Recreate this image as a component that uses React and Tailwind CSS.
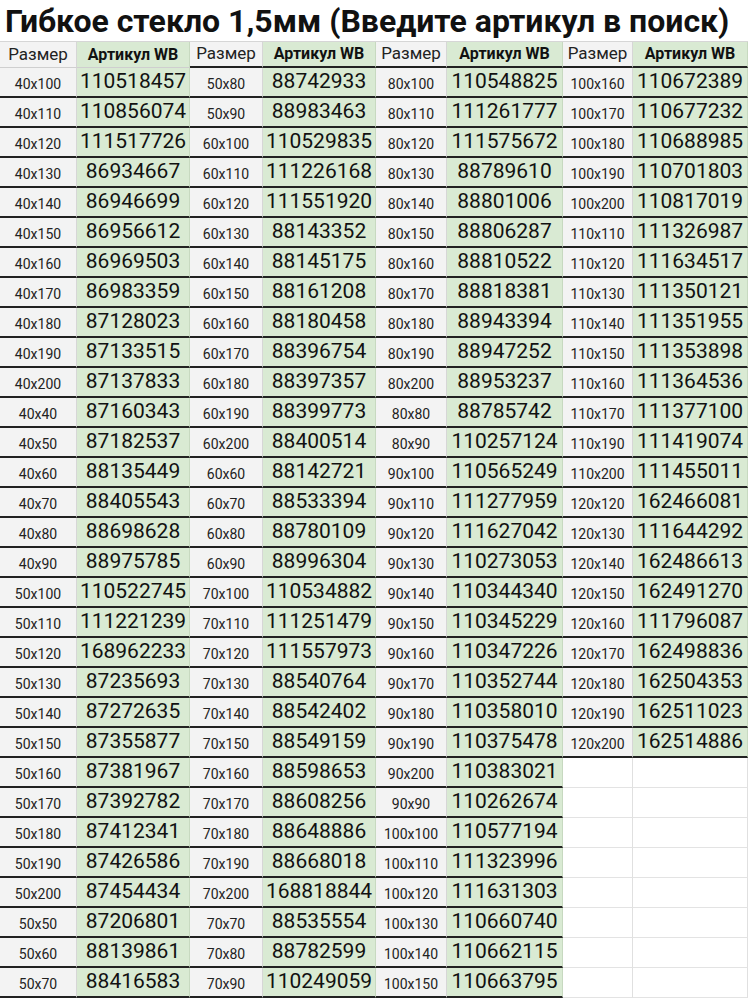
const pairs = [
  [
    ['40x100', '110518457'], ['40x110', '110856074'], ['40x120', '111517726'], ['40x130', '86934667'],
    ['40x140', '86946699'], ['40x150', '86956612'], ['40x160', '86969503'], ['40x170', '86983359'],
    ['40x180', '87128023'], ['40x190', '87133515'], ['40x200', '87137833'], ['40x40', '87160343'],
    ['40x50', '87182537'], ['40x60', '88135449'], ['40x70', '88405543'], ['40x80', '88698628'],
    ['40x90', '88975785'], ['50x100', '110522745'], ['50x110', '111221239'], ['50x120', '168962233'],
    ['50x130', '87235693'], ['50x140', '87272635'], ['50x150', '87355877'], ['50x160', '87381967'],
    ['50x170', '87392782'], ['50x180', '87412341'], ['50x190', '87426586'], ['50x200', '87454434'],
    ['50x50', '87206801'], ['50x60', '88139861'], ['50x70', '88416583'],
  ],
  [
    ['50x80', '88742933'], ['50x90', '88983463'], ['60x100', '110529835'], ['60x110', '111226168'],
    ['60x120', '111551920'], ['60x130', '88143352'], ['60x140', '88145175'], ['60x150', '88161208'],
    ['60x160', '88180458'], ['60x170', '88396754'], ['60x180', '88397357'], ['60x190', '88399773'],
    ['60x200', '88400514'], ['60x60', '88142721'], ['60x70', '88533394'], ['60x80', '88780109'],
    ['60x90', '88996304'], ['70x100', '110534882'], ['70x110', '111251479'], ['70x120', '111557973'],
    ['70x130', '88540764'], ['70x140', '88542402'], ['70x150', '88549159'], ['70x160', '88598653'],
    ['70x170', '88608256'], ['70x180', '88648886'], ['70x190', '88668018'], ['70x200', '168818844'],
    ['70x70', '88535554'], ['70x80', '88782599'], ['70x90', '110249059'],
  ],
  [
    ['80x100', '110548825'], ['80x110', '111261777'], ['80x120', '111575672'], ['80x130', '88789610'],
    ['80x140', '88801006'], ['80x150', '88806287'], ['80x160', '88810522'], ['80x170', '88818381'],
    ['80x180', '88943394'], ['80x190', '88947252'], ['80x200', '88953237'], ['80x80', '88785742'],
    ['80x90', '110257124'], ['90x100', '110565249'], ['90x110', '111277959'], ['90x120', '111627042'],
    ['90x130', '110273053'], ['90x140', '110344340'], ['90x150', '110345229'], ['90x160', '110347226'],
    ['90x170', '110352744'], ['90x180', '110358010'], ['90x190', '110375478'], ['90x200', '110383021'],
    ['90x90', '110262674'], ['100x100', '110577194'], ['100x110', '111323996'], ['100x120', '111631303'],
    ['100x130', '110660740'], ['100x140', '110662115'], ['100x150', '110663795'],
  ],
  [
    ['100x160', '110672389'], ['100x170', '110677232'], ['100x180', '110688985'], ['100x190', '110701803'],
    ['100x200', '110817019'], ['110x110', '111326987'], ['110x120', '111634517'], ['110x130', '111350121'],
    ['110x140', '111351955'], ['110x150', '111353898'], ['110x160', '111364536'], ['110x170', '111377100'],
    ['110x190', '111419074'], ['110x200', '111455011'], ['120x120', '162466081'], ['120x130', '111644292'],
    ['120x140', '162486613'], ['120x150', '162491270'], ['120x160', '111796087'], ['120x170', '162498836'],
    ['120x180', '162504353'], ['120x190', '162511023'], ['120x200', '162514886'],
  ],
];

const ROWS = 31;

function SizeCell({ text }) {
  return (
    <div className="h-[30px] bg-[#f3f3f3] border-r border-r-[#d6d6d6] border-b-2 border-b-[#222] flex items-center justify-center pt-[5px] text-[14px] text-[#222]">
      {text}
    </div>
  );
}

function ArtCell({ text }) {
  return (
    <div className="h-[30px] bg-[#d9ead3] border-r border-r-[#c7d9c0] border-b-2 border-b-[#222] flex items-center justify-center text-[21px] text-[#111]">
      {text}
    </div>
  );
}

function EmptyCell() {
  return <div className="h-[30px] bg-white border-r border-r-[#e0e0e0] border-b border-b-[#e3e3e3]" />;
}

export default function App() {
  const cells = [];
  for (let r = 0; r < ROWS; r++) {
    pairs.forEach((col, p) => {
      const row = col[r];
      if (row) {
        cells.push(<SizeCell key={`s${p}-${r}`} text={row[0]} />);
        cells.push(<ArtCell key={`a${p}-${r}`} text={row[1]} />);
      } else {
        cells.push(<EmptyCell key={`es${p}-${r}`} />);
        cells.push(<EmptyCell key={`ea${p}-${r}`} />);
      }
    });
  }

  return (
    <div className="w-[750px] h-[1000px] overflow-hidden bg-white font-['Roboto','Liberation_Sans',sans-serif]">
      <div className="h-[41px] flex items-center pl-[5px] text-[32px] font-bold text-[#111] leading-none whitespace-nowrap">
        Гибкое стекло 1,5мм (Введите артикул в поиск)
      </div>
      <div className="w-[748px] border-t border-t-[#d6d6d6] grid grid-cols-[77px_113px_73px_113px_71px_116px_70px_115px]">
        {[0, 1, 2, 3].map(p => (
          <div key={`h${p}`} className="contents">
            <div className={`h-[26px] bg-[#f3f3f3] border-r border-r-[#d6d6d6] flex items-center justify-center text-[17px] text-[#222] ${p === 0 ? 'border-b border-b-[#cfcfcf]' : 'border-b-2 border-b-[#222]'}`}>
              Размер
            </div>
            <div className={`h-[26px] bg-[#d9ead3] border-r border-r-[#c7d9c0] flex items-center justify-center text-[16px] font-bold text-[#111] ${p === 0 ? 'border-b border-b-[#cfcfcf]' : 'border-b-2 border-b-[#222]'}`}>
              Артикул WB
            </div>
          </div>
        ))}
        {cells}
      </div>
    </div>
  );
}
